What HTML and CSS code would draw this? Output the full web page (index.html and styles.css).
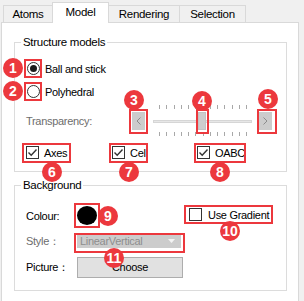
FILE: index.html
```html
<!DOCTYPE html>
<html>
<head>
<meta charset="utf-8">
<link rel="stylesheet" href="styles.css">
</head>
<body>
<div class="tabs">
  <div class="tab tab-atoms">Atoms</div>
  <div class="tab tab-model active">Model</div>
  <div class="tab tab-render">Rendering</div>
  <div class="tab tab-sel">Selection</div>
</div>
<div class="panel">
  <fieldset class="group g1">
    <legend>Structure models</legend>
    <div class="radio-row first"><span class="radio checked"></span><span>Ball and stick</span></div>
    <div class="radio-row"><span class="radio"></span><span>Polyhedral</span></div>
    <div class="slider-row">
      <span class="dis-label">Transparency:</span>
      <span class="sbtn"><svg width="5" height="8" viewBox="0 0 5 8"><path d="M4.5 0.5 L1 4 L4.5 7.5" fill="none" stroke="#8c8c8c" stroke-width="1"/></svg></span>
      <div class="slider">
        <div class="ticks"><i></i><i></i><i></i><i></i><i></i><i></i><i></i><i></i><i></i><i></i><i></i><i></i><i></i></div>
        <div class="track"></div>
        <div class="ticks"><i></i><i></i><i></i><i></i><i></i><i></i><i></i><i></i><i></i><i></i><i></i><i></i><i></i></div>
        <div class="thumb"></div>
      </div>
      <span class="sbtn"><svg width="5" height="8" viewBox="0 0 5 8"><path d="M0.5 0.5 L4 4 L0.5 7.5" fill="none" stroke="#8c8c8c" stroke-width="1"/></svg></span>
    </div>
    <div class="check-row">
      <label class="chk"><span class="box"><svg width="11" height="11" viewBox="0 0 11 11"><path d="M1.5 5.5 L4.2 8.2 L9.5 2.5" fill="none" stroke="#333" stroke-width="1.4"/></svg></span>Axes</label>
      <label class="chk"><span class="box"><svg width="11" height="11" viewBox="0 0 11 11"><path d="M1.5 5.5 L4.2 8.2 L9.5 2.5" fill="none" stroke="#333" stroke-width="1.4"/></svg></span>Cel</label>
      <label class="chk"><span class="box"><svg width="11" height="11" viewBox="0 0 11 11"><path d="M1.5 5.5 L4.2 8.2 L9.5 2.5" fill="none" stroke="#333" stroke-width="1.4"/></svg></span>OABC</label>
    </div>
  </fieldset>
  <fieldset class="group g2">
    <legend>Background</legend>
    <div class="bg-grid">
      <span class="lbl">Colour:</span>
      <div class="colour-cell"><span class="swatch"></span><label class="chk grad"><span class="box"></span>Use Gradient</label></div>
      <span class="lbl dis-label">Style：</span>
      <div class="cell"><span class="combo">LinearVertical<svg class="arrow" width="7" height="4" viewBox="0 0 7 4"><path d="M0 0 L7 0 L3.5 4 Z" fill="#f4f4f4"/></svg></span></div>
      <span class="lbl">Picture：</span>
      <div class="cell"><span class="button">Choose</span></div>
    </div>
  </fieldset>
</div>

<div class="marks">
  <span class="rbox" style="left:24px;top:59px;width:18px;height:19px"></span>
  <span class="rbox" style="left:24px;top:82px;width:18px;height:19px"></span>
  <span class="rbox" style="left:129px;top:109px;width:19px;height:25px"></span>
  <span class="rbox" style="left:196px;top:109px;width:13px;height:25px"></span>
  <span class="rbox" style="left:257px;top:109px;width:20px;height:25px"></span>
  <span class="rbox" style="left:22px;top:143px;width:49px;height:20px"></span>
  <span class="rbox" style="left:109px;top:143px;width:39px;height:20px"></span>
  <span class="rbox" style="left:194px;top:143px;width:52px;height:20px"></span>
  <span class="rbox" style="left:74px;top:203px;width:26px;height:25px"></span>
  <span class="rbox" style="left:184px;top:205px;width:89px;height:19px"></span>
  <span class="rbox" style="left:74px;top:233px;width:111px;height:20px"></span>

  <span class="badge" style="left:3px;top:58px">1</span>
  <span class="badge" style="left:3px;top:81px">2</span>
  <span class="badge" style="left:124px;top:90px">3</span>
  <span class="badge" style="left:192px;top:91px">4</span>
  <span class="badge" style="left:258px;top:89px">5</span>
  <span class="badge" style="left:42px;top:162px">6</span>
  <span class="badge" style="left:119px;top:162px">7</span>
  <span class="badge" style="left:210px;top:162px">8</span>
  <span class="badge" style="left:98px;top:206px">9</span>
  <span class="badge" style="left:220px;top:221px">10</span>
  <span class="badge" style="left:104px;top:248px">11</span>
</div>
</body>
</html>
```
FILE: styles.css
```css
html, body {
  margin: 0;
  padding: 0;
}
body {
  width: 304px;
  height: 301px;
  overflow: hidden;
  background: #f0f0f0;
  font-family: "Liberation Sans", Arial, sans-serif;
  font-size: 11px;
  letter-spacing: -0.3px;
  color: #000;
  position: relative;
}
.tabs {
  display: flex;
  align-items: flex-end;
  height: 23px;
  padding-left: 3px;
  position: relative;
  z-index: 2;
}
.tab {
  box-sizing: border-box;
  height: 17px;
  margin-bottom: 1px;
  border: 1px solid #d9d9d9;
  border-bottom: 0;
  background: #f0f0f0;
  display: flex;
  align-items: center;
  justify-content: center;
  margin-left: -1px;
  font-size: 11.5px;
}
.tab:first-child { margin-left: 0; }
.tab-atoms { width: 50px; }
.tab-model { width: 57px; }
.tab-render { width: 72px; }
.tab-sel { width: 67px; }
.tab.active {
  height: 21px;
  margin-bottom: 0;
  background: #fff;
  padding-bottom: 3px;
  position: relative;
  z-index: 3;
}
.panel {
  box-sizing: border-box;
  margin-top: -1px;
  margin-left: 1px;
  width: 298px;
  height: 290px;
  border: 1px solid #d9d9d9;
  background: #fff;
  padding: 12px 0 0 12px;
}
.group {
  box-sizing: border-box;
  width: 273px;
  margin: 0;
  padding: 0 0 0 11px;
  border: 1px solid #dcdcdc;
  min-inline-size: 0;
}
.group legend {
  margin-left: -5px;
  padding: 0 2px;
  line-height: 14px;
  font-size: 11.5px;
}
.g1 { padding-bottom: 9px; }
.g2 { margin-top: 6px; padding-bottom: 10px; }

.radio-row {
  height: 23px;
  display: flex;
  align-items: center;
  gap: 5px;
  padding-left: 1px;
}
.radio-row.first { margin-top: 8px; }
.radio {
  box-sizing: border-box;
  width: 13px;
  height: 13px;
  border: 1px solid #333;
  border-radius: 50%;
  background: #fff;
  display: flex;
  align-items: center;
  justify-content: center;
}
.radio.checked::after {
  content: "";
  width: 7px;
  height: 7px;
  border-radius: 50%;
  background: #1b1b1b;
}
.slider-row {
  height: 36px;
  display: flex;
  align-items: center;
}
.dis-label { color: #6d6d6d; }
.slider-row .dis-label { width: 106px; }
.sbtn {
  box-sizing: border-box;
  width: 13px;
  height: 18px;
  background: #cccccc;
  border: 1px solid #cccccc;
  display: flex;
  align-items: center;
  justify-content: center;
}
.slider {
  position: relative;
  box-sizing: border-box;
  width: 114px;
  height: 36px;
  padding: 2px 7px 0 8px;
  display: flex;
  flex-direction: column;
}
.ticks {
  height: 4px;
  display: flex;
  justify-content: space-between;
  padding: 0 5px 0 6px;
}
.ticks i {
  display: block;
  width: 1px;
  height: 4px;
  background: #a8a8a8;
}
.track {
  height: 3px;
  margin: 11px 0 9px;
  box-sizing: border-box;
  background: #e7e7e7;
  border: 1px solid #d6d6d6;
}
.thumb {
  position: absolute;
  left: 53px;
  top: 9px;
  width: 8px;
  height: 18px;
  box-sizing: border-box;
  background: #cdcdcd;
  border: 1px solid #c4c4c4;
}
.check-row {
  margin-top: 4px;
  height: 19px;
  display: grid;
  grid-template-columns: 86px 85px auto;
  align-items: center;
}
.chk {
  display: flex;
  align-items: center;
  gap: 5px;
}
.box {
  box-sizing: border-box;
  width: 13px;
  height: 13px;
  border: 1px solid #333;
  background: #fff;
  display: flex;
  align-items: center;
  justify-content: center;
}
.bg-grid {
  margin-top: 11px;
  display: grid;
  grid-template-columns: 51px auto;
  grid-template-rows: 25px 26px 26px;
  row-gap: 0;
  align-items: center;
}
.colour-cell {
  display: flex;
  align-items: center;
}
.swatch {
  width: 20px;
  height: 19px;
  border-radius: 50%;
  background: #000;
}
.grad { margin-left: 92px; margin-top: -2px; gap: 6px; }
.cell { display: flex; align-items: center; }
.combo {
  position: relative;
  box-sizing: border-box;
  width: 104px;
  height: 14px;
  background: #cccccc;
  color: #8e8e8e;
  padding-left: 3px;
  line-height: 14px;
  display: flex;
  align-items: center;
}
.combo .arrow {
  position: absolute;
  right: 6px;
  top: 5px;
}
.button {
  box-sizing: border-box;
  width: 106px;
  height: 21px;
  background: #e1e1e1;
  border: 1px solid #adadad;
  display: flex;
  align-items: center;
  justify-content: center;
}
.marks {
  position: absolute;
  left: 0;
  top: 0;
  width: 304px;
  height: 301px;
  z-index: 5;
  letter-spacing: 0;
}
.rbox {
  position: absolute;
  box-sizing: border-box;
  border: 2px solid #ec383d;
}
.badge {
  position: absolute;
  width: 20px;
  height: 20px;
  border-radius: 50%;
  background: #ec383d;
  color: #fff;
  font-family: "Liberation Sans", Arial, sans-serif;
  font-size: 14px;
  font-weight: bold;
  display: flex;
  align-items: center;
  justify-content: center;
}
```
